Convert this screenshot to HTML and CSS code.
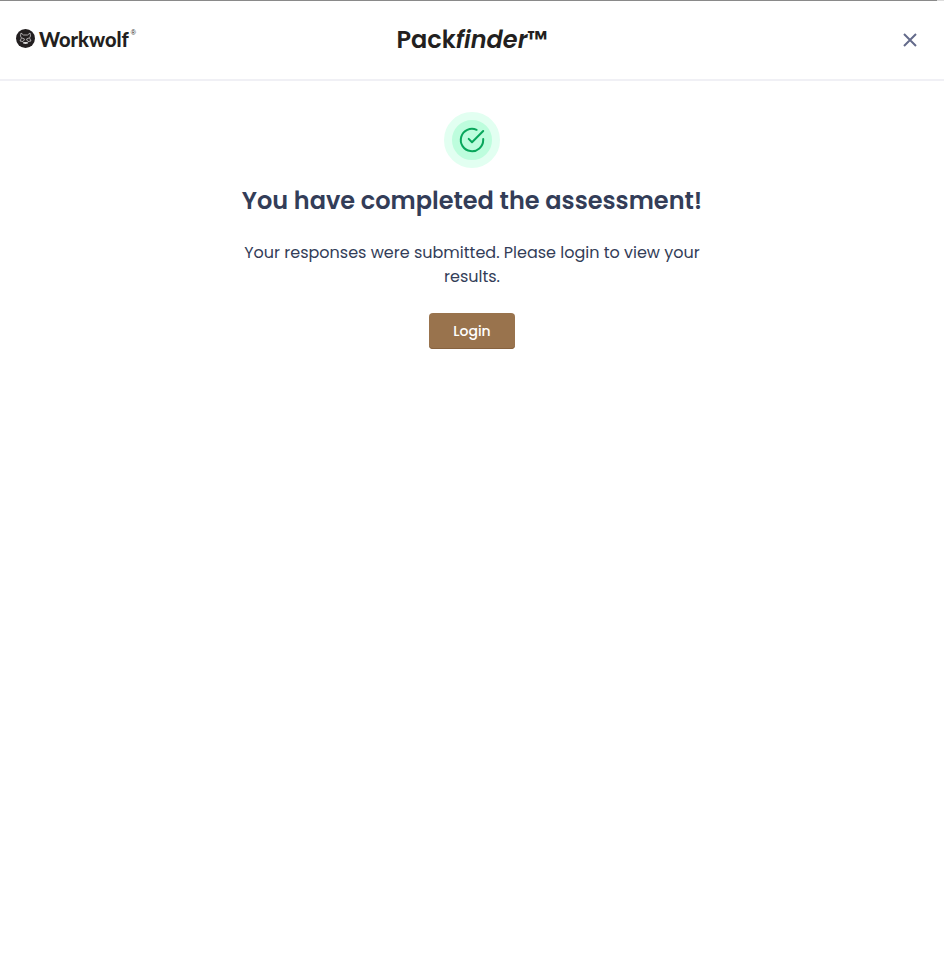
FILE: index.html
```html
<!DOCTYPE html>
<html lang="en">
<head>
<meta charset="utf-8">
<meta name="viewport" content="width=device-width, initial-scale=1">
<title>Packfinder</title>
<link rel="stylesheet" href="styles.css">
</head>
<body>
<div class="progress"><div class="progress-fill"></div></div>
<header class="header">
  <a class="brand" href="#">
    <svg class="brand-mark" viewBox="0 0 38 38" aria-hidden="true">
      <circle cx="19" cy="19" r="19" fill="#231f20"/>
      <g fill="none" stroke="#c4c2c3" stroke-width="1.7" stroke-linejoin="round">
        <path d="M15 12l-5-4-1 6 2 4-3 6 6 1 2 5M23 12l5-4 1 6-2 4 3 6-6 1-2 5M15 12h8"/>
        <path d="M12 18l5 2-2 4M26 18l-5 2 2 4"/>
      </g>
      <path d="M15 26h8l-2 4h-4z" fill="#d5d4d4"/>
    </svg>
    <span class="brand-name">Workwolf</span><span class="brand-reg">®</span>
  </a>
  <h1 class="title">Pack<em>finder</em>™</h1>
  <button class="close" type="button" aria-label="Close">
    <svg viewBox="0 0 24 24" aria-hidden="true"><path d="M6 6l12 12M18 6L6 18"/></svg>
  </button>
</header>
<main class="content">
  <div class="badge">
    <svg viewBox="0 0 28 28" aria-hidden="true">
      <path d="M25.2 13V14A11.2 11.2 0 1 1 18.6 3.8"/>
      <path d="M25.2 5L14 16.2l-3.3-3.3"/>
    </svg>
  </div>
  <h2 class="heading">You have completed the assessment!</h2>
  <p class="message">Your responses were submitted. Please login to view your results.</p>
  <button class="login" type="button">Login</button>
</main>
</body>
</html>
```
FILE: styles.css
```css
* {
  box-sizing: border-box;
}

body {
  margin: 0;
  background: #fff;
  color: #333d58;
  font-family: Poppins, Inter, "Liberation Sans", sans-serif;
}

.progress {
  height: 1px;
  background: #dcdcdc;
}

.progress-fill {
  width: 99.3%;
  height: 100%;
  background: #8a8a8a;
}

.header {
  display: grid;
  grid-template-columns: 1fr auto 1fr;
  align-items: center;
  height: 80px;
  padding: 0 16px;
  border-bottom: 2px solid #f0f0f5;
}

.brand {
  display: flex;
  align-items: center;
  justify-self: start;
  padding-bottom: 3px;
  color: #231f20;
  text-decoration: none;
}

.brand-mark {
  width: 19px;
  height: 19px;
  margin-right: 4px;
}

.brand-name {
  font-family: Lato, sans-serif;
  font-size: 20px;
  font-weight: 900;
  line-height: 24px;
}

.brand-reg {
  align-self: flex-start;
  margin-left: 2px;
  font-family: "Liberation Sans", sans-serif;
  font-size: 7px;
  line-height: 12px;
}

.title {
  margin: 0;
  color: #231f20;
  font-size: 24px;
  font-weight: 600;
  line-height: 32px;
}

.close {
  justify-self: end;
  width: 36px;
  height: 36px;
  padding: 6px;
  border: 0;
  background: none;
}

.close svg {
  display: block;
  width: 24px;
  height: 24px;
  fill: none;
  stroke: #646b8b;
  stroke-width: 2;
}

.content {
  display: flex;
  flex-direction: column;
  align-items: center;
  max-width: 512px;
  margin: 0 auto;
  padding: 31px 16px;
  text-align: center;
}

.badge {
  display: grid;
  place-items: center;
  width: 56px;
  height: 56px;
  border: 8px solid #e2fff1;
  border-radius: 50%;
  background: #bdfddd;
}

.badge svg {
  width: 28px;
  height: 28px;
  fill: none;
  stroke: #08a65b;
  stroke-width: 2;
  stroke-linecap: round;
  stroke-linejoin: round;
}

.heading {
  margin: 17px 0 24px;
  font-size: 24px;
  font-weight: 600;
  line-height: 32px;
}

.message {
  margin: 0 0 24px;
  font-size: 16px;
  line-height: 24px;
}

.login {
  height: 36px;
  padding: 0 24px;
  border: 0;
  border-radius: 4px;
  background: #99734d;
  box-shadow: inset 0 -1px 0 #87623f;
  color: #fff;
  font: inherit;
  font-size: 14px;
  font-weight: 500;
}
```
